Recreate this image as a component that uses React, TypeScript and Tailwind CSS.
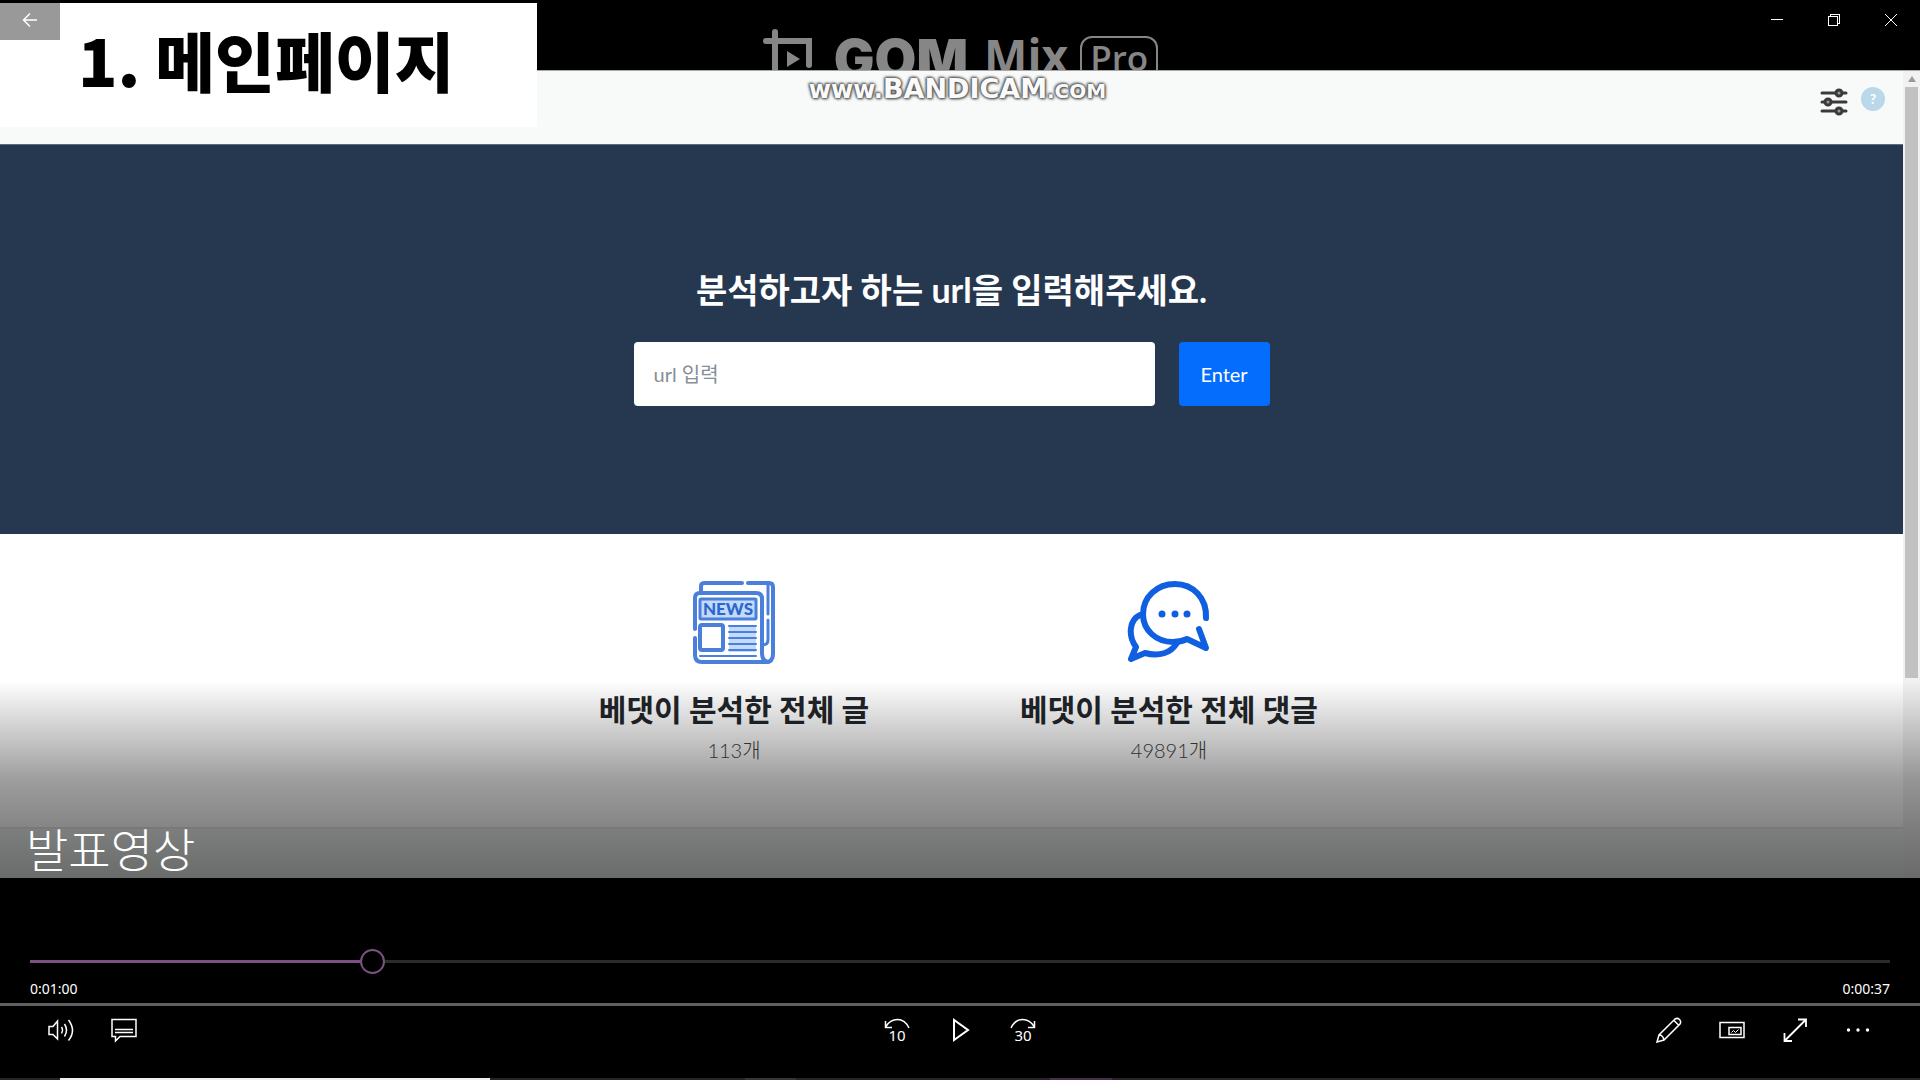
import { useState } from 'react';

type Stat = {
  id: string;
  title: string;
  count: string;
  icon: () => React.ReactNode;
};

function NewsIcon() {
  return (
    <svg viewBox="0 0 84 84" className="w-[84px] h-[84px]" fill="none" stroke="#4a7fdc" strokeWidth="4" strokeLinecap="round" strokeLinejoin="round" aria-hidden="true">
      <path d="M9 11V6q0-3 4-3h37M56 3h21q4 0 4 4v67q0 8-7 8H10q-7 0-7-7V58" />
      <path d="M3 49V18q0-5 5-5h56q6 0 6 6v54q0 8 6 9" />
      <path d="M76 4v30M76 40v20q0 5-6 5" strokeWidth="3" />
      <rect x="8" y="19" width="56" height="20" rx="1" fill="#c3daf9" strokeWidth="3" />
      <rect x="37" y="45" width="27" height="27" fill="#c3daf9" stroke="none" />
      <rect x="8" y="45" width="23" height="25" rx="2" fill="#fff" strokeWidth="4" />
      <path d="M37 46h27M37 52h27M37 58h27M37 64h27M37 70h27M8 76h56" strokeWidth="2" />
      <text x="36" y="35" textAnchor="middle" fill="#2c66cf" stroke="none" fontFamily="Lato, sans-serif" fontWeight="900" fontSize="17">NEWS</text>
    </svg>
  );
}

function ChatIcon() {
  return (
    <svg viewBox="0 0 84 84" className="w-[84px] h-[84px]" fill="none" stroke="#0f5fe0" strokeWidth="6" strokeLinecap="round" strokeLinejoin="round" aria-hidden="true">
      <path d="M79 38C80 18 66 4 48 4C30 4 16 17 16 34C16 51 30 62 46 62C51 62 56 61 60 59L79 68L72 49" />
      <path d="M13 35C2 40 1 56 9 67L4 79L18 73C32 77 44 73 50 63" />
      <g fill="#0f5fe0" stroke="none">
        <circle cx="35" cy="34" r="3.500" />
        <circle cx="48" cy="34" r="3.500" />
        <circle cx="60" cy="34" r="3.500" />
      </g>
    </svg>
  );
}

const stats: Stat[] = [
  { id: 'posts', title: '베댓이 분석한 전체 글', count: '113개', icon: NewsIcon },
  { id: 'comments', title: '베댓이 분석한 전체 댓글', count: '49891개', icon: ChatIcon },
];

function Watermarks() {
  return (
    <div className="h-[70px] overflow-hidden pt-7 flex justify-center text-[#868686]">
      <div className="flex items-start h-20">
        <svg viewBox="0 0 52 62" className="w-[52px] h-[62px] mr-5" fill="none" stroke="#868686" strokeWidth="6" strokeLinecap="round" aria-hidden="true">
          <path d="M13 4v52M4 13h43v24" />
          <path d="M25 23l13 8-13 8z" fill="#868686" stroke="none" />
        </svg>
        <span className="font-['Inter',sans-serif] font-black text-[54px] leading-[54px] pt-1">GOM</span>
        <span className="font-['Open_Sans',sans-serif] font-bold text-[46px] leading-[46px] ml-4 pt-1">Mix</span>
        <span className="font-['Open_Sans',sans-serif] font-semibold text-[35px] leading-[40px] ml-3 mt-2 px-2 border-2 border-[#868686] rounded-xl">Pro</span>
      </div>
    </div>
  );
}

function SiteHeader() {
  return (
    <header className="relative h-[74px] bg-[#f8faf9] border-t border-[#a8a8a8] flex justify-end items-start gap-3 pt-3 pr-[18px]">
      <div className="absolute left-1/2 top-1 w-[320px] -ml-[154px] whitespace-nowrap text-center font-['DejaVu_Sans',sans-serif] font-bold text-[#fafafa] leading-7 [text-shadow:0_0_2px_#555,0_0_3px_#555,1px_1px_3px_#555,-1px_-1px_3px_#666]">
        <span className="text-[24px]">www.</span>
        <span className="text-[27px]">BANDICAM</span>
        <span className="text-[20px]">.COM</span>
      </div>
      <button type="button" aria-label="설정" className="mt-1">
        <svg viewBox="0 0 30 30" className="w-[30px] h-[30px]" fill="none" stroke="#3a3a3a" strokeWidth="3" strokeLinecap="round" aria-hidden="true">
          <path d="M3 6h24M3 15h24M3 24h24" />
          <g fill="#999">
            <circle cx="20" cy="6" r="3" />
            <circle cx="9" cy="15" r="3" />
            <circle cx="20" cy="24" r="3" />
          </g>
        </svg>
      </button>
      <button type="button" aria-label="도움말" className="mt-1 w-6 h-6 rounded-full bg-[#b9d8ea] text-white font-['Lato',sans-serif] font-bold text-sm leading-6">?</button>
    </header>
  );
}

function SitePage() {
  const [url, setUrl] = useState('');

  return (
    <div className="flex bg-white font-['Lato','Noto_Sans_CJK_KR',sans-serif]">
      <div className="flex-1">
        <SiteHeader />
        <section className="bg-[#26384f] border-t border-[#5d6b7a] h-[390px] pt-[120px] flex flex-col items-center">
          <h1 className="text-white font-bold text-[34px] leading-[50px]">분석하고자 하는 url을 입력해주세요.</h1>
          <form className="mt-[27px] flex gap-6" onSubmit={(e) => e.preventDefault()}>
            <input
              type="text"
              aria-label="url 입력"
              placeholder="url 입력"
              value={url}
              onChange={(e) => setUrl(e.target.value)}
              className="w-[521px] h-16 rounded-sm bg-white px-5 text-xl text-gray-700 placeholder:text-[#868e96] outline-none"
            />
            <button type="submit" className="w-[91px] h-16 rounded-sm bg-[#046dfe] text-white text-xl">Enter</button>
          </form>
        </section>
        <section className="h-[293px] pt-[46px] flex justify-center">
          {stats.map((stat) => (
            <div key={stat.id} className="w-[435px] flex flex-col items-center">
              <stat.icon />
              <h2 className="mt-[23px] font-bold text-[30px] leading-[44px] text-[#212529] whitespace-nowrap">{stat.title}</h2>
              <p className="mt-[5px] font-light text-xl leading-7 text-[#444]">{stat.count}</p>
            </div>
          ))}
        </section>
        <div className="h-[51px] bg-[#f1f5f3] border-t-2 border-[#e8e8e8]" />
      </div>
      <div className="w-[17px] bg-[#f1f1f1] flex flex-col items-center border-t border-[#a8a8a8]">
        <svg viewBox="0 0 8 6" className="w-2 h-4" fill="#999" aria-hidden="true">
          <path d="M4 0l4 6H0z" />
        </svg>
        <div className="w-[13px] h-[591px] bg-[#c1c1c1]" />
      </div>
    </div>
  );
}

function WindowButtons() {
  return (
    <div className="absolute top-0 right-px flex text-white">
      <button type="button" aria-label="최소화" className="w-[57px] h-10 flex items-center justify-center">
        <svg viewBox="0 0 12 12" className="w-3 h-3" stroke="currentColor" shapeRendering="crispEdges" aria-hidden="true"><path d="M0 5.500h12" /></svg>
      </button>
      <button type="button" aria-label="이전 크기로" className="w-[57px] h-10 flex items-center justify-center">
        <svg viewBox="0 0 12 12" className="w-3 h-3" fill="none" stroke="currentColor" shapeRendering="crispEdges" aria-hidden="true"><path d="M.5 2.500h9v9h-9zM2.500 2V.5h9v9H10" /></svg>
      </button>
      <button type="button" aria-label="닫기" className="w-[57px] h-10 flex items-center justify-center">
        <svg viewBox="0 0 12 12" className="w-3 h-3" stroke="currentColor" aria-hidden="true"><path d="M0 0l12 12M12 0L0 12" /></svg>
      </button>
    </div>
  );
}

const iconButton = 'w-[63px] h-12 flex items-center justify-center';
const iconProps = {
  viewBox: '0 0 26 26',
  className: 'w-[26px] h-[26px]',
  fill: 'none',
  stroke: 'currentColor',
  strokeWidth: 1.5,
  'aria-hidden': true,
} as const;

function ControlBar() {
  return (
    <div className="grid grid-cols-3 text-white">
      <div className="flex pl-[29px]">
        <button type="button" aria-label="볼륨" className={iconButton}>
          <svg {...iconProps}>
            <path d="M1 9.500h4L9.500 4v18L5 17.500H1zM13.500 10q2 3 0 6.500M16.500 7q4 6 0 12.500M20.500 3q8 10.500 0 20.500" />
          </svg>
        </button>
        <button type="button" aria-label="자막" className={iconButton}>
          <svg {...iconProps}>
            <path d="M1 2.500h24v17H9L4.500 24v-4.500H1zM4 12.500h18M4 15.500h18" />
          </svg>
        </button>
      </div>
      <div className="flex justify-center">
        <button type="button" aria-label="10초 뒤로" className={iconButton}>
          <svg {...iconProps}>
            <path d="M1.500 4v6.500H8M1.500 10Q6 2.500 13.500 2.500T25 11" />
            <text x="13" y="24" textAnchor="middle" fontSize="15" fill="currentColor" stroke="none" fontFamily="Noto Sans, sans-serif">10</text>
          </svg>
        </button>
        <button type="button" aria-label="재생" className={iconButton}>
          <svg {...iconProps}><path d="M7 3v20l14-10z" strokeWidth="2" /></svg>
        </button>
        <button type="button" aria-label="30초 앞으로" className={iconButton}>
          <svg {...iconProps}>
            <path d="M24.500 4v6.500H18M24.500 10Q20 2.500 12.500 2.500T1 11" />
            <text x="13" y="24" textAnchor="middle" fontSize="15" fill="currentColor" stroke="none" fontFamily="Noto Sans, sans-serif">30</text>
          </svg>
        </button>
      </div>
      <div className="flex justify-end pr-[31px]">
        <button type="button" aria-label="편집" className={iconButton}>
          <svg {...iconProps}>
            <path d="M1 25l2-7L19 2q2.500-1.500 4.500.5T24 7L8 23zM3 18q4 0 5 5M18 3.500l4.500 4.500" />
          </svg>
        </button>
        <button type="button" aria-label="미니 보기" className={iconButton}>
          <svg {...iconProps}>
            <path d="M1 5.500h24v15H1z" />
            <path d="M10 10.500h12v7H10z" />
            <path d="M12.500 15.500l2-2 2 2 3-3" strokeWidth="1" />
          </svg>
        </button>
        <button type="button" aria-label="전체 화면" className={iconButton}>
          <svg {...iconProps}><path d="M3 23.500L23.500 3M16 2.500h8V10M2.500 16v8H10" strokeWidth="1.800" /></svg>
        </button>
        <button type="button" aria-label="더 보기" className={iconButton}>
          <svg {...iconProps} fill="currentColor" stroke="none">
            <circle cx="3.500" cy="13" r="1.700" />
            <circle cx="13" cy="13" r="1.700" />
            <circle cx="22.500" cy="13" r="1.700" />
          </svg>
        </button>
      </div>
    </div>
  );
}

export default function App() {
  const [progress, setProgress] = useState(18);

  return (
    <div className="relative min-h-screen bg-black flex flex-col overflow-hidden">
      <main className="relative">
        <Watermarks />
        <SitePage />
        <div className="absolute left-0 top-[3px] w-[537px] h-[124px] bg-white pl-[78px] pt-[6px]">
          <span className="font-['Noto_Sans_CJK_KR',sans-serif] font-black text-[65px] leading-[100px] text-black whitespace-nowrap">1. 메인페이지</span>
        </div>
        <div className="absolute inset-x-0 bottom-0 h-[198px] pl-[26px] flex items-end bg-[linear-gradient(to_bottom,rgba(0,0,0,0)_0%,rgba(0,0,0,0.38)_50%,rgba(0,0,0,0.48)_74%,rgba(0,0,0,0.56)_100%)]">
          <h2 className="font-['Noto_Sans_CJK_KR',sans-serif] font-light text-[46px] leading-[62px] text-white">발표영상</h2>
        </div>
      </main>

      <button type="button" aria-label="뒤로" className="absolute left-0 top-0 w-[60px] h-10 bg-black/40 text-white flex items-center justify-center">
        <svg viewBox="0 0 16 16" className="w-4 h-4" fill="none" stroke="currentColor" strokeWidth="1.500" aria-hidden="true">
          <path d="M15 8H1.500M8 1.500L1.500 8L8 14.500" />
        </svg>
      </button>
      <WindowButtons />

      <footer className="flex-1 flex flex-col">
        <div className="px-[30px] pt-[71px] pb-1 text-white font-['Noto_Sans',sans-serif] text-sm leading-5">
          <input
            type="range"
            aria-label="재생 위치"
            min={0}
            max={100}
            value={progress}
            onChange={(e) => setProgress(Number(e.target.value))}
            style={{ backgroundSize: `${progress}% 3px, 100% 3px` }}
            className="block w-full h-[25px] appearance-none bg-[linear-gradient(#7b5181,#7b5181),linear-gradient(#2b2b2b,#2b2b2b)] bg-[position:left_center] bg-no-repeat [&::-webkit-slider-thumb]:appearance-none [&::-webkit-slider-thumb]:w-[25px] [&::-webkit-slider-thumb]:h-[25px] [&::-webkit-slider-thumb]:rounded-full [&::-webkit-slider-thumb]:border-2 [&::-webkit-slider-thumb]:border-[#7b5181] [&::-webkit-slider-thumb]:bg-black"
          />
          <div className="mt-[5px] flex justify-between">
            <span>0:01:00</span>
            <span>0:00:37</span>
          </div>
        </div>
        <div className="h-[3px] bg-[#606060]" />
        <ControlBar />
        <div className="mt-auto h-[2px] flex bg-[#2a222b]">
          <div className="ml-[60px] w-[430px] bg-[#efefef]" />
          <div className="ml-[255px] w-[51px] bg-[#3b333c]" />
          <div className="ml-[254px] w-[62px] bg-[#4a2c50]" />
        </div>
      </footer>
    </div>
  );
}
